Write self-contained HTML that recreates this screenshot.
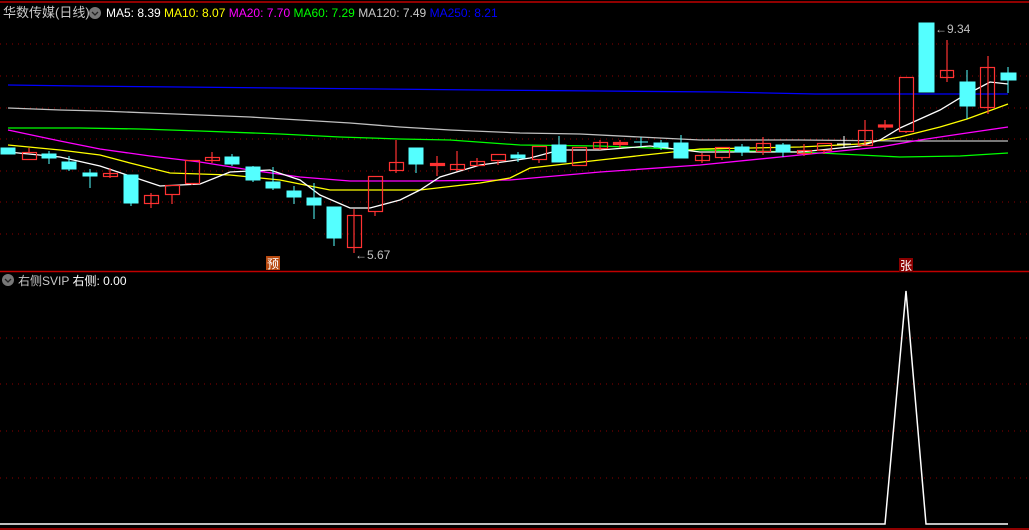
<!DOCTYPE html>
<html><head><meta charset="utf-8"><style>
html,body{margin:0;padding:0;background:#000;width:1029px;height:530px;overflow:hidden}
svg{display:block}
text{font-family:"Liberation Sans","Noto Sans CJK SC",sans-serif;font-size:12px}
</style></head><body>
<svg width="1029" height="530" viewBox="0 0 1029 530" xmlns="http://www.w3.org/2000/svg">
<rect width="1029" height="530" fill="#000"/>
<line x1="0" y1="2" x2="1029" y2="2" stroke="#c00000" stroke-width="1.5"/>
<g stroke="#8a0000" stroke-dasharray="1,5" stroke-width="1">
<line x1="0" y1="44" x2="1029" y2="44"/><line x1="0" y1="76" x2="1029" y2="76"/>
<line x1="0" y1="108" x2="1029" y2="108"/><line x1="0" y1="139" x2="1029" y2="139"/>
<line x1="0" y1="171" x2="1029" y2="171"/><line x1="0" y1="202" x2="1029" y2="202"/>
<line x1="0" y1="234" x2="1029" y2="234"/>
<line x1="0" y1="338" x2="1029" y2="338"/><line x1="0" y1="384" x2="1029" y2="384"/>
<line x1="0" y1="431" x2="1029" y2="431"/><line x1="0" y1="478" x2="1029" y2="478"/>
</g>
<line x1="0" y1="271.5" x2="1029" y2="271.5" stroke="#c00000" stroke-width="1.5"/>
<line x1="0" y1="529" x2="1029" y2="529" stroke="#c00000" stroke-width="1.5"/>

<!-- MA lines -->
<g fill="none" stroke-width="1.3">
<polyline stroke="#0000ff" points="8,85 80,86 180,87 280,88 380,89 480,90 600,91 720,92 815,94 1008,94"/>
<polyline stroke="#c0c0c0" points="8,108 60,110 100,111 150,113 200,115 250,117 300,120 350,123 400,127 450,130 520,133 580,134 640,137 700,140 800,140 900,141 1008,141"/>
<polyline stroke="#00ff00" points="8,128 80,128 140,129 200,131 280,134 340,137 400,139 450,140 520,145 600,146 700,150 800,152 900,157 960,156 1008,153"/>
<polyline stroke="#ff00ff" points="8,130 60,141 100,149 150,156 200,162 250,170 300,177 350,181 420,181 510,180 600,172 700,165 800,155 880,147 920,140 960,134 1008,127"/>
<polyline stroke="#ffff00" points="8,145 60,150 100,155 130,163 170,173 230,175 280,180 330,190 380,190 420,190 480,183 510,178 530,168 600,160 700,149 800,147 860,144 900,137 940,127 967,119 1008,104"/>
<polyline stroke="#ffffff" points="8,152 60,157 100,166 130,176 160,186 200,184 230,172 270,170 300,180 320,195 350,208 370,208 400,200 420,190 440,177 480,165 510,161 530,158 560,150 600,150 650,146 700,152 800,152 860,146 880,140 900,128 940,110 960,98 975,90 990,82 1008,84"/>
</g>

<!-- candles -->
<g stroke="#54ffff" fill="#54ffff">
<rect x="1" y="148" width="14" height="6"/>
<line x1="49" y1="151" x2="49" y2="164"/><rect x="42" y="154" width="14" height="4"/>
<line x1="69" y1="156" x2="69" y2="171"/><rect x="62" y="162" width="14" height="7"/>
<line x1="90" y1="169" x2="90" y2="188"/><rect x="83" y="173" width="14" height="3"/>
<line x1="131" y1="175" x2="131" y2="206"/><rect x="124" y="175" width="14" height="28"/>
<line x1="232" y1="154" x2="232" y2="166"/><rect x="225" y="157" width="14" height="7"/>
<line x1="253" y1="166" x2="253" y2="182"/><rect x="246" y="167" width="14" height="13"/>
<line x1="273" y1="167" x2="273" y2="190"/><rect x="266" y="182" width="14" height="6"/>
<line x1="294" y1="186" x2="294" y2="204"/><rect x="287" y="191" width="14" height="6"/>
<line x1="314" y1="183" x2="314" y2="219"/><rect x="307" y="198" width="14" height="7"/>
<line x1="334" y1="207" x2="334" y2="246"/><rect x="327" y="207" width="14" height="31"/>
<line x1="416" y1="148" x2="416" y2="173"/><rect x="409" y="148" width="14" height="16"/>
<line x1="518" y1="152" x2="518" y2="162"/><rect x="511" y="155" width="14" height="3"/>
<line x1="559" y1="136" x2="559" y2="162"/><rect x="552" y="145" width="14" height="17"/>
<line x1="641" y1="137" x2="641" y2="147"/><line x1="634" y1="142" x2="648" y2="142"/>
<line x1="661" y1="140" x2="661" y2="150"/><rect x="654" y="143" width="14" height="4"/>
<line x1="681" y1="135" x2="681" y2="158"/><rect x="674" y="143" width="14" height="15"/>
<line x1="742" y1="144" x2="742" y2="156"/><rect x="735" y="147" width="14" height="5"/>
<line x1="783" y1="143" x2="783" y2="157"/><rect x="776" y="145" width="14" height="7"/>
<rect x="919" y="23" width="15" height="69"/>
<line x1="967" y1="70" x2="967" y2="119"/><rect x="960" y="82" width="15" height="24"/>
<line x1="1008" y1="67" x2="1008" y2="93"/><rect x="1001" y="73" width="15" height="7"/>
</g>
<g stroke="#ff3232" fill="none" stroke-width="1.2">
<line x1="29" y1="148" x2="29" y2="152"/><rect x="22.5" y="152.5" width="14" height="7"/>
<line x1="110" y1="168" x2="110" y2="178"/><rect x="103.5" y="173.5" width="14" height="3"/>
<line x1="151" y1="193" x2="151" y2="208"/><rect x="144.5" y="195.5" width="14" height="8"/>
<line x1="172" y1="194" x2="172" y2="204"/><rect x="165.5" y="185.5" width="14" height="9"/>
<line x1="192" y1="183" x2="192" y2="185"/><rect x="185.5" y="160.5" width="14" height="23"/>
<line x1="212" y1="152" x2="212" y2="163"/><rect x="205.5" y="157.5" width="14" height="3"/>
<line x1="354" y1="209" x2="354" y2="253"/><rect x="347.5" y="215.5" width="14" height="32"/>
<line x1="375" y1="211" x2="375" y2="216"/><rect x="368.5" y="176.5" width="14" height="35"/>
<line x1="396" y1="140" x2="396" y2="173"/><rect x="389.5" y="162.5" width="14" height="8"/>
<line x1="437" y1="156" x2="437" y2="176"/><rect x="430.5" y="163.5" width="14" height="2" fill="#ff3232"/>
<line x1="457" y1="151" x2="457" y2="171"/><rect x="450.5" y="164.5" width="14" height="5"/>
<line x1="477" y1="158" x2="477" y2="166"/><rect x="470.5" y="161.5" width="14" height="4"/>
<line x1="498" y1="160" x2="498" y2="165"/><rect x="491.5" y="154.5" width="14" height="6"/>
<line x1="539" y1="159" x2="539" y2="163"/><rect x="532.5" y="146.5" width="14" height="13"/>
<line x1="579" y1="165" x2="579" y2="166"/><rect x="572.5" y="147.5" width="14" height="18"/>
<line x1="600" y1="140" x2="600" y2="150"/><rect x="593.5" y="142.5" width="14" height="6"/>
<line x1="620" y1="140" x2="620" y2="148"/><rect x="613.5" y="142.5" width="14" height="2" fill="#ff3232"/>
<line x1="702" y1="153" x2="702" y2="163"/><rect x="695.5" y="155.5" width="14" height="5"/>
<line x1="722" y1="157" x2="722" y2="160"/><rect x="715.5" y="147.5" width="14" height="10"/>
<line x1="763" y1="137" x2="763" y2="155"/><rect x="756.5" y="143.5" width="14" height="8"/>
<line x1="804" y1="144" x2="804" y2="156"/><rect x="797.5" y="150.5" width="14" height="3"/>
<line x1="824" y1="150" x2="824" y2="154"/><rect x="817.5" y="143.5" width="14" height="7"/>
<line x1="865" y1="120" x2="865" y2="146"/><rect x="858.5" y="130.5" width="14" height="15"/>
<line x1="885" y1="120" x2="885" y2="130"/><rect x="878.5" y="125" width="14" height="2" fill="#ff3232"/>
<line x1="906" y1="131" x2="906" y2="133"/><rect x="899.5" y="77.5" width="14" height="54"/>
<line x1="947" y1="40" x2="947" y2="82"/><rect x="940.5" y="70.5" width="13" height="7"/>
<line x1="988" y1="56" x2="988" y2="114"/><rect x="980.5" y="67.5" width="14" height="40"/>
</g>
<g stroke="#fff"><line x1="844" y1="136" x2="844" y2="148"/><line x1="837" y1="144" x2="851" y2="144"/></g>

<!-- labels -->
<text x="355" y="259" fill="#c0c0c0">←5.67</text>
<text x="935" y="33" fill="#c0c0c0">←9.34</text>
<rect x="266" y="256" width="14" height="14" fill="#b84a10"/>
<text x="267" y="268" fill="#fff" style="font-size:12px">预</text>
<rect x="899" y="258" width="14" height="14" fill="#8b0000"/>
<text x="900" y="270" fill="#fff" style="font-size:12px">张</text>

<text x="3" y="17" fill="#c8c8c8" style="font-size:13px">华数传媒(日线)</text>
<circle cx="95" cy="13" r="6" fill="#777"/><path d="M92,12 L95,15 L98,12" stroke="#222" fill="none" stroke-width="1.3"/>
<text x="106" y="17" style="font-size:12px"><tspan fill="#fff">MA5: 8.39 </tspan><tspan fill="#ffff00"> MA10: 8.07 </tspan><tspan fill="#ff00ff"> MA20: 7.70 </tspan><tspan fill="#00ff00"> MA60: 7.29 </tspan><tspan fill="#c8c8c8"> MA120: 7.49 </tspan><tspan fill="#0000ff"> MA250: 8.21</tspan></text>

<circle cx="8" cy="280" r="6" fill="#777"/><path d="M5,279 L8,282 L11,279" stroke="#222" fill="none" stroke-width="1.3"/>
<text x="18" y="285" fill="#c8c8c8">右侧SVIP <tspan fill="#fff">右侧: 0.00</tspan></text>

<polyline fill="none" stroke="#fff" stroke-width="1.5" points="0,524 885,524 906,291 926,524 1008,524"/>
</svg>
</body></html>
